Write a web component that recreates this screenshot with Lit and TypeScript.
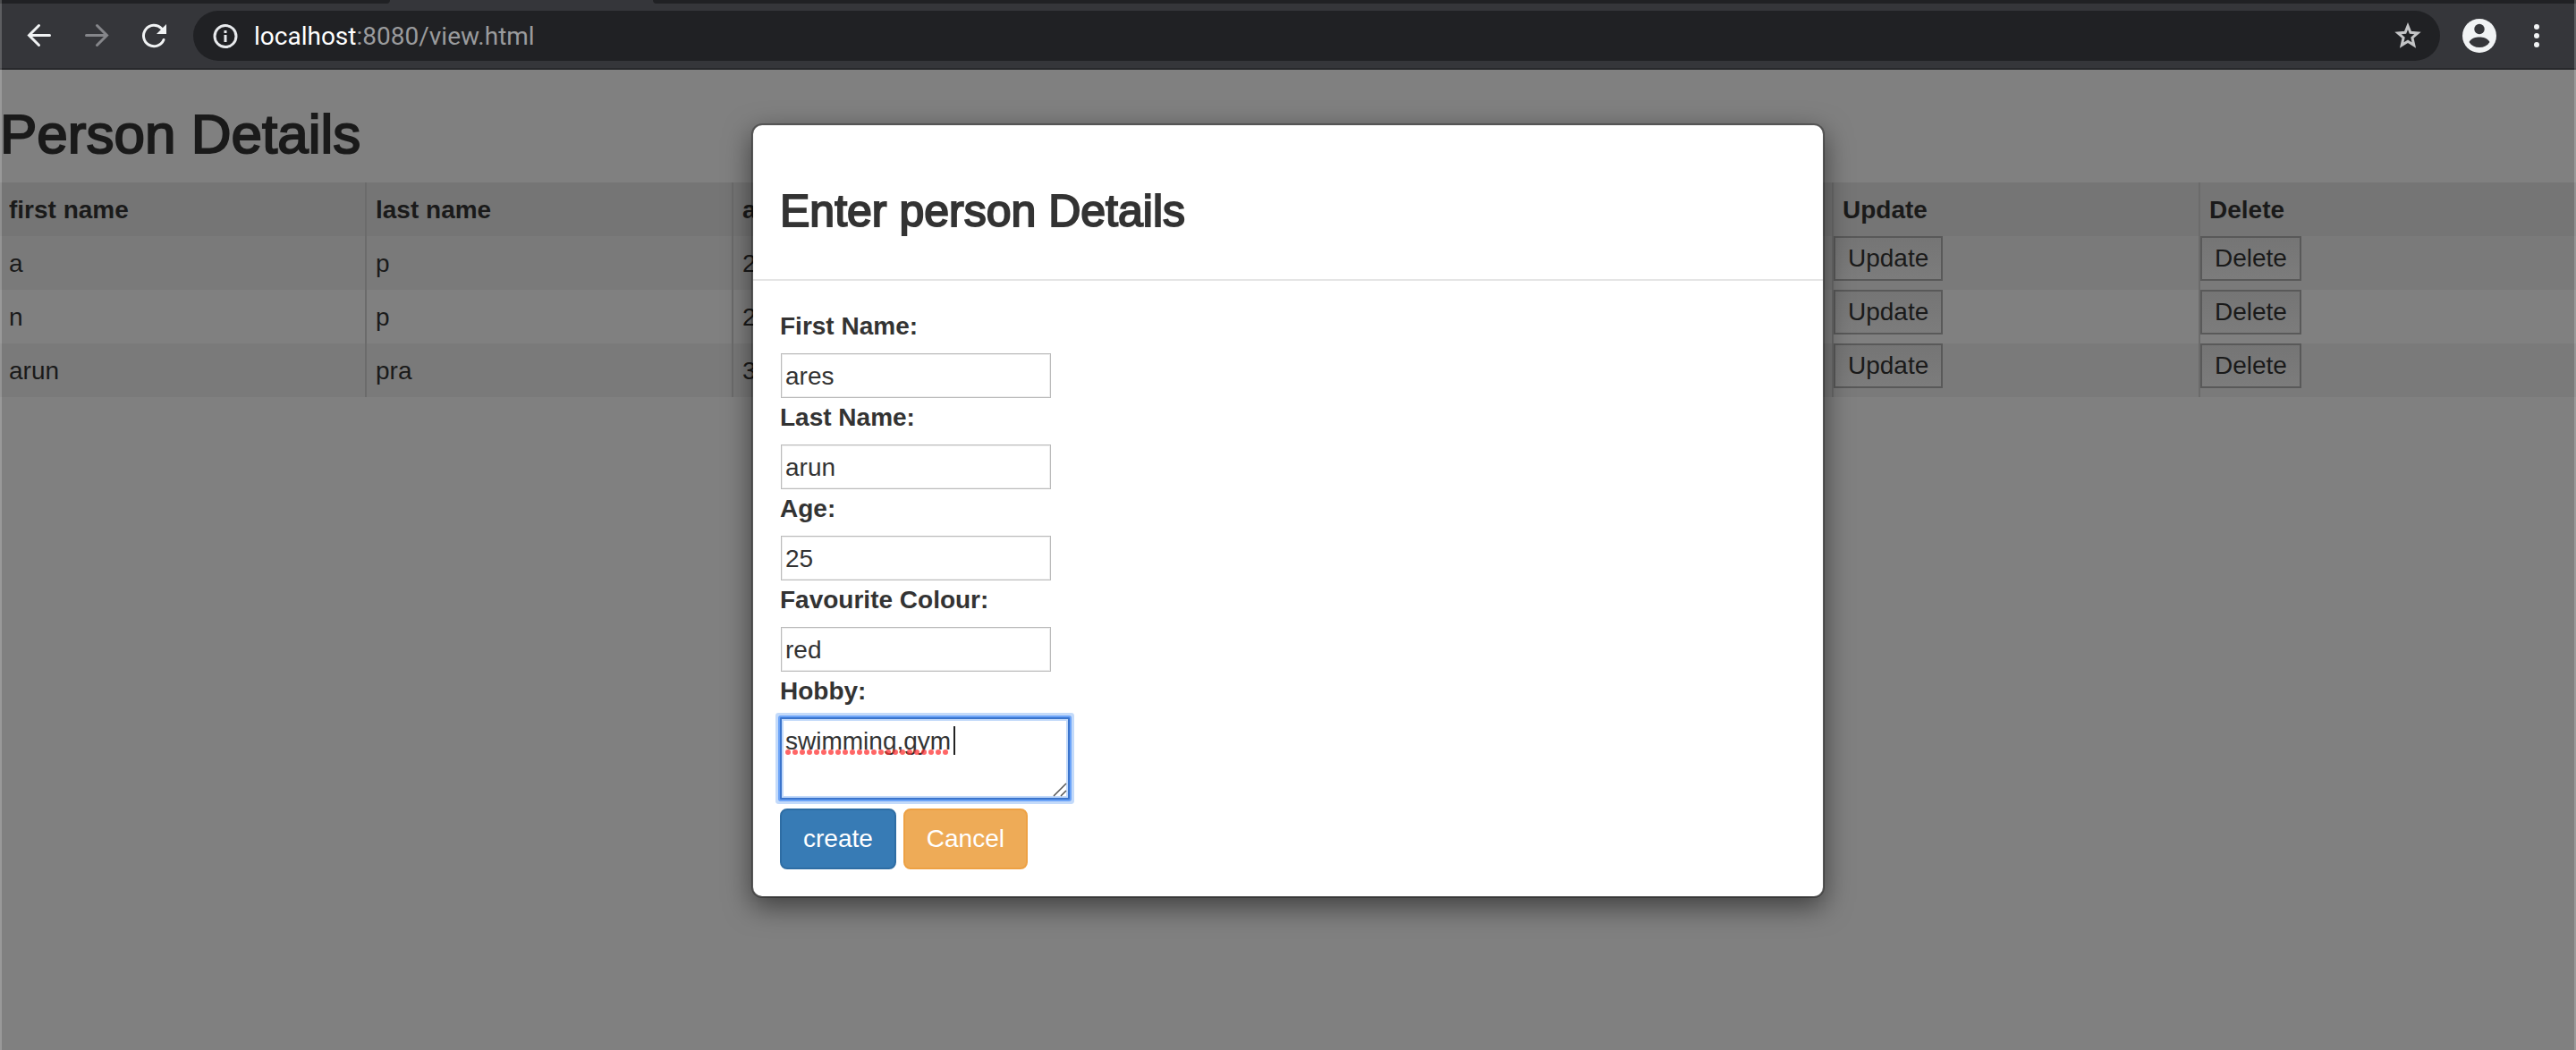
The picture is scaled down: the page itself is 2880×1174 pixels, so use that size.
import { LitElement, html, css } from "lit";
import { customElement } from "lit/decorators.js";

interface Person {
  first: string;
  last: string;
  age: string;
  colour: string;
  hobby: string;
}

const people: Person[] = [
  { first: "a", last: "p", age: "2", colour: "", hobby: "" },
  { first: "n", last: "p", age: "2", colour: "", hobby: "" },
  { first: "arun", last: "pra", age: "3", colour: "", hobby: "" },
];

const fields = [
  { id: "first", label: "First Name:", value: "ares" },
  { id: "last", label: "Last Name:", value: "arun" },
  { id: "age", label: "Age:", value: "25" },
  { id: "colour", label: "Favourite Colour:", value: "red" },
];

@customElement("browser-bar")
class BrowserBar extends LitElement {
  static styles = css`
    :host { display: block; }
    .tabs { height: 4px; display: flex; background: #35363a; }
    .tab { height: 4px; background: #202124; }
    .tab-left { width: 436px; border-bottom-right-radius: 12px; }
    .tab-right { margin-left: 294px; flex: 1; border-bottom-left-radius: 12px; }
    .bar {
      display: flex;
      align-items: center;
      box-sizing: border-box;
      height: 74px;
      padding: 0 28px;
      background: #35363a;
      border-bottom: 2px solid #28292c;
    }
    button { border: 0; padding: 0; background: none; display: block; }
    svg { display: block; }
    .nav { display: flex; gap: 32px; margin-right: 28px; }
    .omnibox {
      flex: 1;
      display: flex;
      align-items: center;
      box-sizing: border-box;
      height: 56px;
      border-radius: 28px;
      background: #202124;
      padding: 0 20px;
      gap: 16px;
      margin-right: 24px;
    }
    .address {
      flex: 1;
      padding-top: 2px;
      font-family: Roboto, "Liberation Sans", sans-serif;
      font-size: 28px;
      line-height: 36px;
      color: #9a9b9d;
    }
    .host { color: #fff; }
    .menu { display: flex; align-items: center; gap: 28px; }
  `;

  render() {
    return html`
      <div class="tabs"><div class="tab tab-left"></div><div class="tab tab-right"></div></div>
      <div class="bar">
        <div class="nav">
          <button aria-label="Back">
            <svg width="32" height="32" viewBox="0 0 32 32" fill="none" stroke="#f1f3f4" stroke-width="3" stroke-linecap="round"><path d="M27.500 15.500H5M15.500 4.500L4.500 15.500L15.500 26.500" /></svg>
          </button>
          <button aria-label="Forward">
            <svg width="32" height="32" viewBox="0 0 32 32" fill="none" stroke="#85868a" stroke-width="3" stroke-linecap="round"><path d="M4.500 15.500H27M16.500 4.500L27.500 15.500L16.500 26.500" /></svg>
          </button>
          <button aria-label="Reload">
            <svg width="32" height="32" viewBox="0 0 32 32"><path d="M27 20.500A11.700 11.700 0 1 1 24.500 7.800" fill="none" stroke="#f1f3f4" stroke-width="3" stroke-linecap="round" /><path d="M30 3V14H19Z" fill="#f1f3f4" /></svg>
          </button>
        </div>
        <div class="omnibox">
          <svg width="32" height="32" viewBox="0 0 32 32"><circle cx="16" cy="16.500" r="12" fill="none" stroke="#e8eaed" stroke-width="3" /><path d="M14.500 15h3v8h-3zM14.500 10h3v3h-3z" fill="#e8eaed" /></svg>
          <div class="address"><span class="host">localhost</span>:8080/view.html</div>
          <button aria-label="Bookmark">
            <svg width="32" height="32" viewBox="0 0 32 32"><path d="M16 5L18.900 12.300L27 13L20.900 18.200L22.800 26.500L16 22.200L9.200 26.500L11.100 18.200L5 13L13.100 12.300Z" fill="none" stroke="#c4c5c7" stroke-width="3" /></svg>
          </button>
        </div>
        <div class="menu">
          <button aria-label="Profile">
            <svg width="40" height="40" viewBox="0 0 40 40"><circle cx="20" cy="20" r="19" fill="#f1f3f4" /><circle cx="20" cy="12.500" r="5.700" fill="#35363a" /><path d="M8.500 27C11 22.500 16 21.500 20 21.500S29 22.500 31.500 27C29 31 25 33 20 33S11 31 8.500 27Z" fill="#35363a" /></svg>
          </button>
          <button aria-label="More">
            <svg width="32" height="32" viewBox="0 0 32 32" fill="#f1f3f4"><circle cx="16" cy="6" r="3" /><circle cx="16" cy="16" r="3" /><circle cx="16" cy="26" r="3" /></svg>
          </button>
        </div>
      </div>
    `;
  }
}

@customElement("person-table")
class PersonTable extends LitElement {
  static styles = css`
    :host { display: block; }
    h2 {
      margin: 0;
      padding: 39px 0 21px;
      font-size: 62px;
      line-height: 66px;
      font-weight: 400;
      -webkit-text-stroke: 2px currentColor;
    }
    table { width: 100%; table-layout: fixed; border-collapse: separate; border-spacing: 0; }
    .data { width: 410px; }
    th, td {
      box-sizing: border-box;
      height: 60px;
      padding: 2px 10px 0;
      border-right: 2px solid #6b6b6b;
      text-align: left;
      vertical-align: middle;
      line-height: 40px;
      white-space: nowrap;
    }
    th:last-child, td:last-child { border-right: 0; }
    th { background: #757575; }
    tr:nth-child(odd) td { background: #7a7a7a; }
    td.action { padding: 0; vertical-align: top; }
    button {
      display: block;
      box-sizing: border-box;
      height: 50px;
      padding: 0 14px;
      border: 2px solid #595959;
      background: linear-gradient(#757575, #7c7c7c);
      font: inherit;
      line-height: 40px;
      color: inherit;
    }
  `;

  render() {
    return html`
      <h2>Person Details</h2>
      <table>
        <colgroup><col class="data" span="6" /><col /></colgroup>
        <thead>
          <tr>
            <th>first name</th><th>last name</th><th>age</th><th></th><th></th><th>Update</th><th>Delete</th>
          </tr>
        </thead>
        <tbody>
          ${people.map((p) => html`
            <tr>
              <td>${p.first}</td><td>${p.last}</td><td>${p.age}</td><td>${p.colour}</td><td>${p.hobby}</td>
              <td class="action"><button>Update</button></td>
              <td class="action"><button>Delete</button></td>
            </tr>
          `)}
        </tbody>
      </table>
    `;
  }
}

@customElement("person-dialog")
class PersonDialog extends LitElement {
  static styles = css`
    :host { display: block; }
    .dialog {
      box-sizing: border-box;
      width: 1200px;
      max-width: 100%;
      border: 2px solid rgba(0, 0, 0, 0.3);
      border-radius: 12px;
      background: #fff;
      background-clip: padding-box;
      box-shadow: 0 10px 30px rgba(0, 0, 0, 0.5);
      color: #333;
    }
    .header { padding: 69px 30px 49px; border-bottom: 2px solid #e5e5e5; }
    h3 {
      margin: 0;
      font-size: 50px;
      line-height: 54px;
      font-weight: 400;
      -webkit-text-stroke: 2px currentColor;
    }
    form { padding: 30px; }
    label { display: block; font-weight: 700; line-height: 40px; padding: 1px 0 9px; }
    input, textarea {
      display: block;
      box-sizing: border-box;
      margin: 0;
      border: 1px solid #bbb;
      border-radius: 0;
      background: #fff;
      color: inherit;
      font: inherit;
      outline: 0;
    }
    input {
      width: 302px;
      height: 50px;
      margin: 1px;
      padding: 2px 4px 0;
      box-shadow: inset 0 0 0 1px #eee;
    }
    textarea {
      width: 324px;
      height: 92px;
      padding: 5px 4px 0;
      line-height: 40px;
      border: 2px solid #3a74cc;
      border-radius: 1px;
      box-shadow: 0 0 0 2px #6ca4f8, 0 0 0 5px #c3dafa, inset 0 0 0 2px #c3dafa;
      resize: none;
      overflow: hidden;
    }
    .memo { position: relative; width: 324px; margin-bottom: 10px; }
    .marks { position: absolute; left: 0; top: 0; pointer-events: none; }
    .actions { display: flex; gap: 8px; }
    button {
      box-sizing: border-box;
      height: 68px;
      padding: 0 24px;
      border: 2px solid #2e6da4;
      border-radius: 8px;
      background: #377bb5;
      color: #fff;
      font: inherit;
    }
    .cancel { background: #eeab57; border-color: #eda144; }
  `;

  render() {
    return html`
      <div class="dialog" role="dialog" aria-labelledby="title">
        <div class="header"><h3 id="title">Enter person Details</h3></div>
        <form>
          ${fields.map((f) => html`
            <label for=${f.id}>${f.label}</label>
            <input id=${f.id} type="text" .value=${f.value} />
          `)}
          <label for="hobby">Hobby:</label>
          <div class="memo">
            <textarea id="hobby" spellcheck="false" .value=${"swimming,gym"}></textarea>
            <svg class="marks" width="324" height="92" viewBox="0 0 324 92">
              <path d="M9 39H186" stroke="#f33" stroke-opacity="0.75" stroke-width="6" stroke-linecap="round" stroke-dasharray="0 8" />
              <path d="M195 10V42" stroke="#222" stroke-width="2" />
              <path d="M306 88L320 74M314 88L320 82" stroke="#555" stroke-width="1.500" />
            </svg>
          </div>
          <div class="actions">
            <button type="button">create</button>
            <button type="button" class="cancel">Cancel</button>
          </div>
        </form>
      </div>
    `;
  }
}

@customElement("app-root")
class AppRoot extends LitElement {
  static styles = css`
    :host {
      display: block;
      font-family: "Liberation Sans", Arial, sans-serif;
      font-size: 28px;
      line-height: 40px;
      color: #1a1a1a;
    }
    .window {
      position: relative;
      display: flex;
      flex-direction: column;
      min-height: 100vh;
      background: #808080;
    }
    .window::after {
      content: "";
      position: absolute;
      inset: 0;
      border: solid rgba(255, 255, 255, 0.2);
      border-width: 0 2px;
      pointer-events: none;
    }
    .page { flex: 1; position: relative; }
    .overlay {
      position: absolute;
      inset: 0;
      display: flex;
      justify-content: center;
      align-items: flex-start;
      padding-top: 60px;
    }
  `;

  render() {
    return html`
      <div class="window">
        <browser-bar></browser-bar>
        <div class="page">
          <person-table></person-table>
          <div class="overlay"><person-dialog></person-dialog></div>
        </div>
      </div>
    `;
  }
}
